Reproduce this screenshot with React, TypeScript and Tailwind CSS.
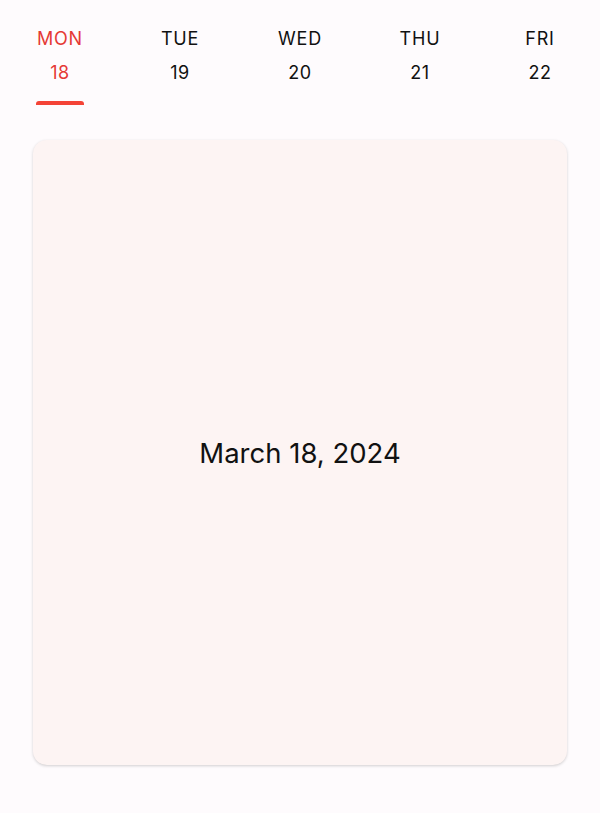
const days = [
  { name: 'MON', num: 18 },
  { name: 'TUE', num: 19 },
  { name: 'WED', num: 20 },
  { name: 'THU', num: 21 },
  { name: 'FRI', num: 22 },
]

export default function App() {
  const selected = 0

  return (
    <div className="min-h-[813px] bg-[#fefbfd] font-['Inter',sans-serif] text-[#1c1b1f]">
      {/* Week tabs */}
      <div className="grid grid-cols-5 pt-[28px]">
        {days.map((d, i) => (
          <div key={d.name} className="flex flex-col items-center">
            <span
              className={`text-[18px] leading-[22px] tracking-[0.8px] ${
                i === selected ? 'text-[#e53935]' : 'text-[#111111]'
              }`}
            >
              {d.name}
            </span>
            <span
              className={`mt-[12px] text-[18px] leading-[22px] tracking-[0.5px] ${
                i === selected ? 'text-[#e53935]' : 'text-[#111111]'
              }`}
            >
              {d.num}
            </span>
            <div
              className={`mt-[17px] h-[4px] w-[48px] rounded-t-[3px] ${
                i === selected ? 'bg-[#f44336]' : 'bg-transparent'
              }`}
            />
          </div>
        ))}
      </div>

      {/* Day card */}
      <div className="px-[33px] pt-[35px]">
        <div className="flex h-[625px] items-center justify-center rounded-[14px] bg-[#fdf4f3] shadow-[0_1px_3px_rgba(0,0,0,0.18)]">
          <span className="text-[27.5px] leading-[34px] text-[#111111]">March 18, 2024</span>
        </div>
      </div>
    </div>
  )
}
